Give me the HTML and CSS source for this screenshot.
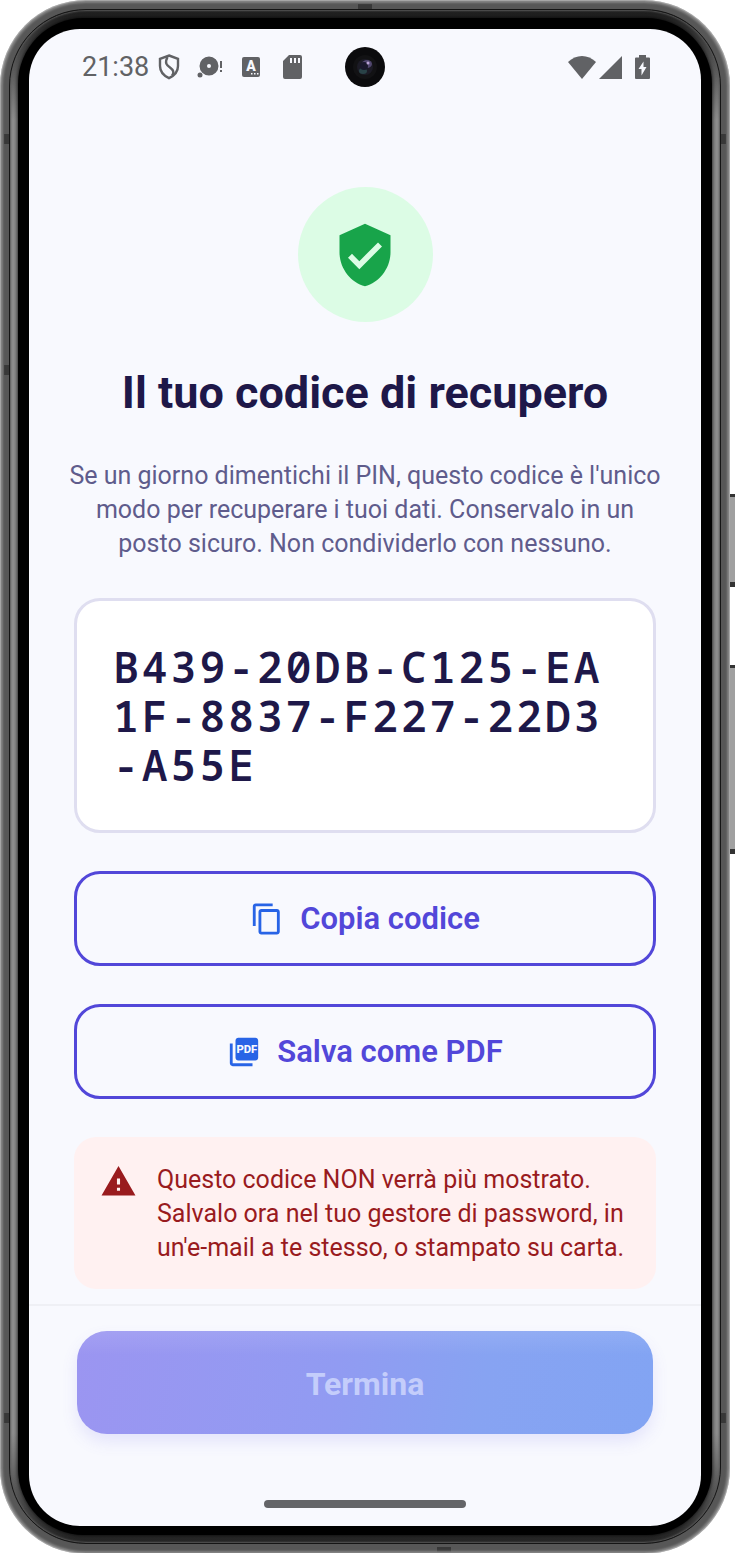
FILE: index.html
```html
<!DOCTYPE html>
<html lang="it">
<head>
<meta charset="utf-8">
<meta name="viewport" content="width=device-width, initial-scale=1">
<title>Il tuo codice di recupero</title>
<link rel="stylesheet" href="styles.css">
</head>
<body>
<div class="device">
  <div class="side-key side-key-power"></div>
  <div class="side-key side-key-volume"></div>
  <div class="frame">
    <div class="rim">
      <div class="bezel">
        <div class="screen">
          <header class="status">
            <div class="status-left">
              <span class="clock">21:38</span>
              <svg class="i-shield" viewBox="0 0 22 26"><path d="M11 1.500 20 4.800V12c0 5.600-3.600 9.600-9 12.200C5.600 21.600 2 17.600 2 12V4.800z" fill="none" stroke="currentColor" stroke-width="2.400"/><path d="M9.500 3C6.500 9 8.500 11 12 13.500s4.500 5 2 8" fill="none" stroke="currentColor" stroke-width="2.400"/></svg>
              <svg class="i-disc" viewBox="0 0 26 24"><path fill="currentColor" fill-rule="evenodd" d="M12 1.500a9.500 9.500 0 1 1 0 19 9.500 9.500 0 0 1 0-19zm0 7.500a2 2 0 1 0 0 4 2 2 0 0 0 0-4z"/><circle cx="3" cy="20" r="2.500" fill="currentColor"/><path fill="currentColor" d="M23 6h2v7h-2zM23 15h2v2h-2z"/></svg>
              <svg class="i-letter" viewBox="0 0 18 20"><rect width="18" height="20" rx="2" fill="currentColor"/><text x="9" y="14" text-anchor="middle" class="icon-letter">A</text><path d="M9 16h1.500v1.500H9zM12 16h1.500v1.500H12zM15 16h1.500v1.500H15z" fill="#f8f9fe"/></svg>
              <svg class="i-card" viewBox="0 0 19 24"><path fill="currentColor" fill-rule="evenodd" d="M6 0h11a2 2 0 0 1 2 2v20a2 2 0 0 1-2 2H2a2 2 0 0 1-2-2V6zM7 3v5h2V3zm4 0v5h2V3zm4 0v5h2V3z"/></svg>
            </div>
            <div class="status-right">
              <svg class="i-wifi" viewBox="0 0 28 23"><path fill="currentColor" d="M0 6C8-2 20-2 28 6L14 23z"/></svg>
              <svg class="i-signal" viewBox="0 0 23 23"><path fill="currentColor" d="M23 0v23H0z"/></svg>
              <svg class="i-battery" viewBox="0 0 15 24"><path fill="currentColor" fill-rule="evenodd" d="M4 0h7v2.500h3a1 1 0 0 1 1 1V23a1 1 0 0 1-1 1H1a1 1 0 0 1-1-1V3.500a1 1 0 0 1 1-1h3zM8.500 6.500 3.500 14h3v6.500l5-8.500h-3z"/></svg>
            </div>
            <svg class="camera" viewBox="0 0 40 40"><circle cx="20" cy="20" r="20" fill="#0b0b0d"/><circle cx="20" cy="20" r="12" fill="#121214"/><circle cx="20" cy="20" r="8" fill="#1c1b26"/><ellipse cx="22" cy="17" rx="5" ry="4" fill="#51476f"/><ellipse cx="18" cy="24" rx="4" ry="3" fill="#294247"/><circle cx="19" cy="19" r="4" fill="#19182b"/><circle cx="23" cy="16" r="1.500" fill="#b9a2d5"/></svg>
          </header>

          <main class="content">
            <div class="badge">
              <svg viewBox="0 0 24 24"><path fill="currentColor" d="M12 1L3 5v6c0 5.550 3.840 10.740 9 12 5.160-1.260 9-6.450 9-12V5l-9-4zm-2 16l-4-4 1.410-1.410L10 14.170l6.590-6.590L18 9l-8 8z"/></svg>
            </div>
            <h1 class="title">Il tuo codice di recupero</h1>
            <p class="lead">Se un giorno dimentichi il PIN, questo codice è l'unico modo per recuperare i tuoi dati. Conservalo in un posto sicuro. Non condividerlo con nessuno.</p>
            <div class="code">B439-20DB-C125-EA1F-8837-F227-22D3-A55E</div>
            <button class="outline" type="button">
              <svg viewBox="0 0 24 24"><path fill="currentColor" d="M16 1H4c-1.100 0-2 .9-2 2v14h2V3h12V1zm3 4H8c-1.100 0-2 .9-2 2v14c0 1.100.9 2 2 2h11c1.100 0 2-.9 2-2V7c0-1.100-.9-2-2-2zm0 16H8V7h11v14z"/></svg>
              Copia codice
            </button>
            <button class="outline" type="button">
              <svg viewBox="0 0 24 24"><path fill="currentColor" d="M20 2H8c-1.100 0-2 .9-2 2v12c0 1.100.9 2 2 2h12c1.100 0 2-.9 2-2V4c0-1.100-.9-2-2-2zM4 6H2v14c0 1.100.9 2 2 2h14v-2H4V6z"/><text x="14" y="13" text-anchor="middle" class="icon-pdf">PDF</text></svg>
              Salva come PDF
            </button>
            <div class="alert" role="alert">
              <svg viewBox="0 0 24 24"><path fill="currentColor" d="M1 21h22L12 2 1 21zm12-3h-2v-2h2v2zm0-4h-2v-4h2v4z"/></svg>
              <p>Questo codice NON verrà più mostrato. Salvalo ora nel tuo gestore di password, in un'e-mail a te stesso, o stampato su carta.</p>
            </div>
          </main>

          <footer class="footer">
            <button class="finish" type="button" disabled>Termina</button>
            <div class="home"></div>
          </footer>
        </div>
      </div>
    </div>
  </div>
</div>
</body>
</html>
```
FILE: styles.css
```css
* { box-sizing: border-box; }

body {
  margin: 0;
  background: #fff;
  font-family: Roboto, "Noto Sans", sans-serif;
}

h1, p { margin: 0; }
svg { display: block; flex: none; }
button { font-family: inherit; }

/* Device shell */
.device {
  position: relative;
  padding-right: 5px;
}

.side-key {
  position: absolute;
  right: 0;
  width: 5px;
  border: solid #333;
  border-width: 3px 0 5px;
  background: #a0a0a0;
}
.side-key-power { top: 494px; height: 93px; }
.side-key-volume { top: 665px; height: 189px; }

/* Metal band with its antenna breaks */
.frame {
  position: relative;
  padding: 9px 9px 10px;
  border-radius: 86px;
  background:
    linear-gradient(#383838, #383838) 4px 134px / 6px 10px no-repeat,
    linear-gradient(#383838, #383838) 4px 365px / 6px 10px no-repeat,
    linear-gradient(#383838, #383838) 4px calc(100% - 131px) / 6px 10px no-repeat,
    linear-gradient(#383838, #383838) calc(100% - 4px) 134px / 6px 10px no-repeat,
    linear-gradient(#383838, #383838) calc(100% - 4px) calc(100% - 131px) / 6px 10px no-repeat,
    linear-gradient(#383838, #383838) 50% 4px / 14px 6px no-repeat,
    linear-gradient(#383838, #383838) 61% calc(100% - 1px) / 14px 6px no-repeat,
    #575757;
  box-shadow: inset 0 0 1px 1px #aaa, inset 0 0 2px 3px #808080;
}

.rim {
  padding: 8px;
  border: 1px solid #151515;
  border-radius: 77px;
  background: linear-gradient(#1c1c1c, #8e8e8e 110px, #8e8e8e calc(100% - 110px), #222);
  box-shadow: inset 0 0 2px 1px #5a5a5a;
}

.bezel {
  padding: 11px 11px 9px;
  border-radius: 66px;
  background: #000;
  box-shadow: 0 0 4px #000;
}

.screen {
  display: flex;
  flex-direction: column;
  border-radius: 51px;
  background: #f8f9fe;
  overflow: hidden;
}

/* Status bar */
.status {
  position: relative;
  display: flex;
  align-items: center;
  justify-content: space-between;
  height: 76px;
  padding: 0 51px 0 53px;
  color: #616265;
}
.status-left, .status-right { display: flex; align-items: center; }
.clock { font-size: 27px; line-height: 32px; margin-right: 9px; }
.i-shield { width: 22px; height: 26px; margin-right: 17px; }
.i-disc { width: 26px; height: 24px; margin-right: 19px; }
.i-letter { width: 18px; height: 20px; margin-right: 23px; }
.i-card { width: 19px; height: 24px; }
.i-wifi { width: 28px; height: 23px; margin-right: 3px; }
.i-signal { width: 23px; height: 23px; margin-right: 13px; }
.i-battery { width: 15px; height: 24px; }
.icon-letter { font-size: 14px; font-weight: 900; fill: #f8f9fe; }
.camera {
  position: absolute;
  top: 18px;
  left: calc(50% - 20px);
  width: 40px;
  height: 40px;
}

/* Content */
.content {
  display: flex;
  flex-direction: column;
  padding: 82px 45px 15px;
}

.badge {
  display: flex;
  align-items: center;
  justify-content: center;
  align-self: center;
  width: 135px;
  height: 135px;
  border-radius: 50%;
  background: #dcfce5;
  color: #18a44a;
}
.badge svg { width: 68px; height: 68px; }

.title {
  margin-top: 44px;
  color: #1e1849;
  font-size: 45px;
  font-weight: 700;
  line-height: 54px;
  text-align: center;
}

.lead {
  margin: 39px -8px 0;
  color: #5f5c8c;
  font-size: 25px;
  line-height: 34px;
  text-align: center;
}

.code {
  margin-top: 37px;
  padding: 41px 36px;
  border: 3px solid #dfdef0;
  border-radius: 26px;
  background: #fff;
  color: #1e1849;
  font-family: "Droid Sans Mono", "Noto Sans Mono", "DejaVu Sans Mono", monospace;
  font-size: 43px;
  font-weight: 600;
  letter-spacing: 3px;
  line-height: 49px;
  word-break: break-all;
}

.outline {
  display: flex;
  align-items: center;
  justify-content: center;
  gap: 16px;
  height: 95px;
  margin-top: 38px;
  padding: 0 20px;
  border: 3px solid #5247d9;
  border-radius: 26px;
  background: transparent;
  color: #5247d9;
  font-size: 31px;
  font-weight: 600;
}
.outline svg { width: 34px; height: 34px; color: #2864e6; }
.icon-pdf { font-size: 8px; font-weight: 800; fill: #f8f9fe; }

.alert {
  display: flex;
  align-items: flex-start;
  gap: 20px;
  margin-top: 38px;
  padding: 26px 26px 24px;
  border-radius: 22px;
  background: #fff1f1;
  color: #991b1e;
  font-size: 25px;
  line-height: 34px;
}
.alert svg { width: 37px; height: 37px; }

/* Footer */
.footer {
  display: flex;
  flex-direction: column;
  padding: 25px 48px 18px;
  border-top: 2px solid #eff0f5;
}

.finish {
  height: 103px;
  padding: 2px 0 0;
  border: 0;
  border-radius: 30px;
  background:
    linear-gradient(rgba(255, 255, 255, 0.1), rgba(255, 255, 255, 0) 24px),
    linear-gradient(100deg, #9b95f1, #919bf2 45%, #87a3f2 70%, #82a4f3);
  box-shadow: 0 8px 16px rgba(99, 91, 235, 0.13);
  color: #c4cdfb;
  font-size: 32px;
  font-weight: 700;
}

.home {
  align-self: center;
  width: 202px;
  height: 8px;
  margin-top: 66px;
  border-radius: 4px;
  background: #646568;
}
```
